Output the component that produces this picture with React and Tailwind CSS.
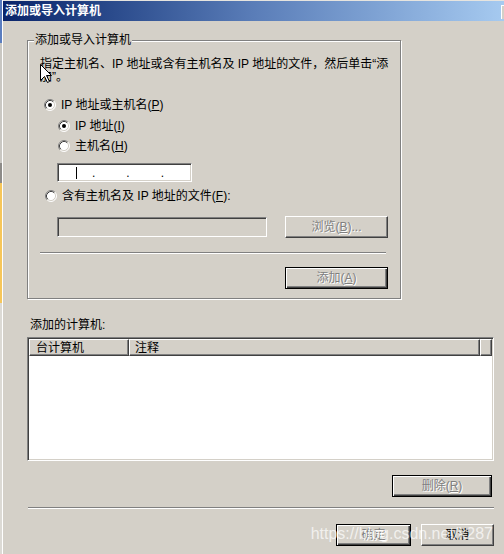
import React from 'react';

const raised = 'border border-t-white border-l-white border-r-[#404040] border-b-[#404040] shadow-[inset_-1px_-1px_0_#808080]';
const defaultBtn = 'border border-black shadow-[inset_1px_1px_0_#fff,inset_-1px_-1px_0_#404040,inset_-2px_-2px_0_#808080]';
const sunken = 'border border-t-[#808080] border-l-[#808080] border-r-white border-b-white shadow-[inset_1px_1px_0_#404040,inset_-1px_-1px_0_#d4d0c8]';
const disabledText = 'text-[#808080] [text-shadow:1px_1px_0_#fff]';

function Radio({ checked = false }) {
  return (
    <svg width="12" height="12" viewBox="0 0 12 12" className="shrink-0" aria-hidden>
      <circle cx="6" cy="6" r="5" fill="#fff" />
      <path d="M2.11 9.89 A5.5 5.5 0 0 1 9.89 2.11" fill="none" stroke="#808080" />
      <path d="M9.89 2.11 A5.5 5.5 0 0 1 2.11 9.89" fill="none" stroke="#fff" />
      <path d="M2.82 9.18 A4.5 4.5 0 0 1 9.18 2.82" fill="none" stroke="#404040" />
      <path d="M9.18 2.82 A4.5 4.5 0 0 1 2.82 9.18" fill="none" stroke="#d4d0c8" />
      {checked ? <circle cx="6" cy="6" r="2" fill="#000" /> : null}
    </svg>
  );
}

function RadioRow({ checked, children, className = '' }) {
  return (
    <div className={`flex h-[16px] items-center gap-[5px] ${className}`}>
      <Radio checked={checked} />
      <span className="whitespace-nowrap leading-[14px]">{children}</span>
    </div>
  );
}

function Button({ children, variant = 'normal', disabled = false, className = '' }) {
  return (
    <button
      type="button"
      className={`flex h-[22px] items-center justify-center bg-[#d4d0c8] text-[12px] leading-[14px] ${
        variant === 'default' ? defaultBtn : raised
      } ${disabled ? disabledText : 'text-black'} ${className}`}
    >
      {children}
    </button>
  );
}

function Etched({ className = '' }) {
  return <div className={`h-[2px] border-t border-t-[#808080] border-b border-b-white ${className}`} />;
}

export default function App() {
  return (
    <div className="relative flex h-[554px] w-[504px] overflow-hidden bg-[#d4d0c8] font-['Liberation_Sans','Noto_Sans_CJK_SC',sans-serif] text-[12px] text-black">
      {/* desktop strip behind the dialog */}
      <div className="flex w-[2px] flex-col">
        <div className="h-[43px] bg-[#5a7dbf]" />
        <div className="h-[120px] bg-[#c9c7c2]" />
        <div className="h-[20px] bg-[#8d8b88]" />
        <div className="h-[120px] bg-[#f6c65a]" />
        <div className="flex-1 bg-[#dcdad5]" />
      </div>
      <div className="w-px bg-white" />

      <div className="flex min-w-0 flex-1 flex-col">
        <div className="h-px bg-[#e6e4df]" />
        <div className="flex h-[20px] items-center bg-gradient-to-r from-[#0a246a] via-[#5a7db8] to-[#a6caf0] pl-[2px]">
          <span className="text-[12px] font-bold leading-[14px] text-white">添加或导入计算机</span>
          <div className="ml-auto mt-[2px] h-[14px] w-[3px] border-l border-t border-white bg-[#d4d0c8]" />
        </div>

        <div className="flex flex-col pl-[24px] pr-[10px]">
          <fieldset className="mt-[12px] w-[374px] border border-[#808080] p-0 shadow-[inset_1px_1px_0_#fff,1px_1px_0_#fff]">
            <legend className="ml-[6px] bg-[#d4d0c8] px-[1px] leading-[14px]">添加或导入计算机</legend>
            <div className="flex flex-col pb-[9px] pl-[12px] pt-[11px]">
              <p className="whitespace-nowrap leading-[13px]">
                指定主机名、IP 地址或含有主机名及 IP 地址的文件，然后单击“添
                <br />
                加”。
              </p>

              <RadioRow checked className="ml-[4px] mt-[13px]">
                IP 地址或主机名(<u>P</u>)
              </RadioRow>
              <RadioRow checked className="ml-[18px] mt-[5px]">
                IP 地址(<u>I</u>)
              </RadioRow>
              <RadioRow className="ml-[18px] mt-[4px]">
                主机名(<u>H</u>)
              </RadioRow>

              <div className={`ml-[17px] mt-[9px] flex h-[19px] w-[135px] items-center bg-white ${sunken}`}>
                <span className="ml-[18px] h-[12px] w-px bg-black" />
                <span className="ml-[15px] leading-none">.</span>
                <span className="ml-[31px] leading-none">.</span>
                <span className="ml-[31px] leading-none">.</span>
              </div>

              <RadioRow className="ml-[5px] mt-[6px]">
                含有主机名及 IP 地址的文件(<u>F</u>):
              </RadioRow>

              <div className="ml-[17px] mt-[12px] flex items-center gap-[18px]">
                <div className={`h-[20px] w-[210px] bg-[#d4d0c8] ${sunken}`} />
                <Button disabled className="w-[103px]">
                  浏览(<u>B</u>)...
                </Button>
              </div>

              <Etched className="mt-[14px] w-[346px]" />

              <Button variant="default" disabled className="ml-[245px] mt-[13px] w-[103px]">
                添加(<u>A</u>)
              </Button>
            </div>
          </fieldset>

          <div className="mt-[19px] pl-[3px] leading-[14px]">添加的计算机:</div>

          <div className={`mt-[5px] flex h-[124px] flex-col bg-white ${sunken}`}>
            <div className="mx-px mt-px flex h-[17px]">
              <div className={`flex w-[100px] items-center bg-[#d4d0c8] pl-[6px] leading-[14px] ${raised}`}>台计算机</div>
              <div className={`flex w-[351px] items-center bg-[#d4d0c8] pl-[5px] leading-[14px] ${raised}`}>注释</div>
              <div className={`flex-1 bg-[#d4d0c8] ${raised}`} />
            </div>
          </div>

          <Button variant="default" disabled className="ml-auto mr-[2px] mt-[14px] w-[100px]">
            删除(<u>R</u>)
          </Button>

          <Etched className="mt-[10px] ml-px" />

          <div className="mt-[15px] flex justify-end gap-[10px]">
            <Button variant="default" disabled className="w-[75px]">
              确定
            </Button>
            <Button className="w-[73px]">取消</Button>
          </div>
        </div>
      </div>

      {/* mouse pointer over the description */}
      <svg className="absolute left-[40px] top-[64px]" width="13" height="20" viewBox="0 0 13 20" aria-hidden>
        <path d="M0.5 0.5 L0.5 16.5 L4.5 12.5 L7.5 18.5 L9.5 17.5 L6.5 11.5 L11.5 11.5 Z" fill="#fff" stroke="#000" />
      </svg>

      {/* watermark */}
      <div className="pointer-events-none absolute right-[11px] top-[524px] whitespace-nowrap font-['Liberation_Sans',sans-serif] text-[16px] leading-[20px] text-white/70">
        https://blog.csdn.net/k287
      </div>
    </div>
  );
}
